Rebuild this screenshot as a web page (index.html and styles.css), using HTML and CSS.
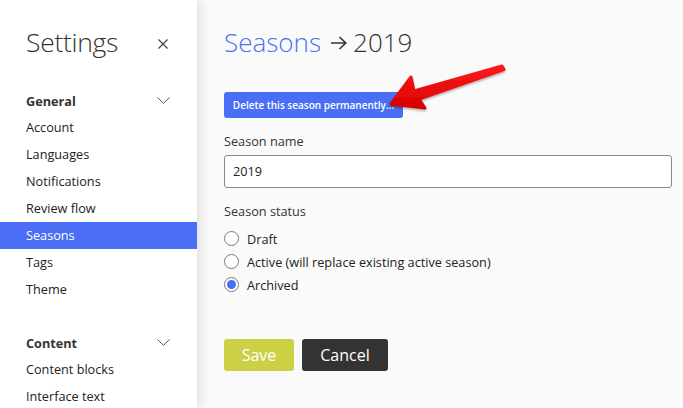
FILE: index.html
```html
<!DOCTYPE html>
<html>
<head>
<meta charset="utf-8">
<link rel="stylesheet" href="styles.css">
</head>
<body>
<div class="app">
  <aside class="sidebar">
    <div class="side-head">
      <h1 class="side-title">Settings</h1>
      <svg class="close" width="10" height="10" viewBox="0 0 10 10"><path d="M0.5 0.5L9.5 9.5M9.5 0.5L0.5 9.5" stroke="#444" stroke-width="1.2" fill="none"/></svg>
    </div>
    <div class="group">
      <div class="group-head"><span>General</span><svg class="chev" width="13" height="7" viewBox="0 0 13 7"><path d="M0.5 0.5L6.5 6.3L12.5 0.5" stroke="#555" stroke-width="1" fill="none"/></svg></div>
      <div class="item">Account</div>
      <div class="item">Languages</div>
      <div class="item">Notifications</div>
      <div class="item">Review flow</div>
      <div class="item active">Seasons</div>
      <div class="item">Tags</div>
      <div class="item">Theme</div>
    </div>
    <div class="group group2">
      <div class="group-head"><span>Content</span><svg class="chev" width="13" height="7" viewBox="0 0 13 7"><path d="M0.5 0.5L6.5 6.3L12.5 0.5" stroke="#555" stroke-width="1" fill="none"/></svg></div>
      <div class="item">Content blocks</div>
      <div class="item">Interface text</div>
    </div>
  </aside>
  <main class="main">
    <h2 class="page-title"><span class="crumb">Seasons</span><svg class="title-arrow" width="17" height="14" viewBox="0 0 17 14"><path d="M1 7H15.5M9.5 1L15.8 7L9.5 13" stroke="#333" stroke-width="1.6" fill="none"/></svg>2019</h2>
    <button class="btn-delete">Delete this season permanently...</button>
    <label class="field-label">Season name</label>
    <div class="input">2019</div>
    <div class="field-label status-label">Season status</div>
    <div class="radios">
      <div class="radio-row"><span class="radio"></span><span>Draft</span></div>
      <div class="radio-row"><span class="radio"></span><span>Active (will replace existing active season)</span></div>
      <div class="radio-row"><span class="radio checked"></span><span>Archived</span></div>
    </div>
    <div class="actions">
      <button class="btn btn-save">Save</button>
      <button class="btn btn-cancel">Cancel</button>
    </div>
  </main>
  <svg class="annot" width="683" height="408" viewBox="0 0 683 408">
    <defs>
      <filter id="sh" x="-10%" y="-30%" width="130%" height="180%">
        <feDropShadow dx="0" dy="1.5" stdDeviation="1.2" flood-color="#000" flood-opacity="0.35"/>
      </filter>
      <linearGradient id="rg" x1="0" y1="0" x2="0" y2="1">
        <stop offset="0" stop-color="#ff1a1a"/>
        <stop offset="1" stop-color="#d60000"/>
      </linearGradient>
    </defs>
    <path filter="url(#sh)" d="M391 104 L411 77 L414 91 L502 66 L504 69.5 L419 99 L425 108 Z" fill="url(#rg)" stroke="url(#rg)" stroke-width="3" stroke-linejoin="round"/>
  </svg>
</div>
</body>
</html>
```
FILE: styles.css
```css
* { box-sizing: border-box; }
html, body { margin: 0; padding: 0; }
body {
  font-family: "Open Sans", "Liberation Sans", sans-serif;
  background: #fafafa;
  color: #222;
  width: 683px;
  height: 408px;
  overflow: hidden;
}
.app {
  position: relative;
  display: flex;
  height: 408px;
}
.sidebar {
  width: 197px;
  flex: none;
  background: #fff;
  box-shadow: 2px 0 12px rgba(0,0,0,0.13);
  padding-top: 24px;
  position: relative;
  z-index: 1;
}
.side-head {
  display: flex;
  align-items: center;
  justify-content: space-between;
  padding: 0 29px 0 26px;
  height: 36px;
}
.side-title {
  margin: 0;
  font-size: 26.5px;
  font-weight: 300;
  line-height: 36px;
  color: #333;
  letter-spacing: -0.3px;
}
.close { margin-top: 4px; }
.group { margin-top: 27px; }
.group2 { margin-top: 26px; }
.group-head {
  display: flex;
  align-items: center;
  justify-content: space-between;
  height: 27px;
  padding: 0 27px 0 26px;
  font-size: 12.7px;
  font-weight: 700;
  color: #333;
}
.chev { margin-top: -1px; }
.item {
  height: 27px;
  line-height: 27px;
  padding: 0 27px 0 26px;
  font-size: 12.7px;
  color: #222;
}
.item.active {
  background: #4a6ff5;
  color: #fff;
}
.main {
  flex: 1;
  padding: 24px 11px 0 27px;
  display: flex;
  flex-direction: column;
  align-items: flex-start;
}
.page-title {
  margin: 0;
  font-size: 26px;
  font-weight: 300;
  line-height: 36px;
  color: #333;
  display: flex;
  align-items: center;
}
.crumb { color: #4a6ff5; }
.title-arrow { margin: 2px 6px 0 9px; }
.btn-delete {
  margin-top: 32px;
  height: 26px;
  width: 179px;
  padding: 0;
  border: none;
  border-radius: 3px;
  background: #4a6ff5;
  color: #fff;
  font-family: inherit;
  font-size: 10px;
  font-weight: 600;
}
.field-label {
  margin-top: 13px;
  font-size: 12.7px;
  line-height: 20px;
  color: #333;
}
.input {
  margin-top: 4px;
  align-self: stretch;
  height: 33px;
  border: 1px solid #8a8a8a;
  border-radius: 3px;
  background: #fff;
  padding: 0 8px;
  font-size: 12.7px;
  line-height: 31px;
  color: #222;
}
.status-label { margin-top: 13px; }
.radios { margin-top: 6px; }
.radio-row {
  display: flex;
  align-items: center;
  height: 23px;
  font-size: 12.7px;
  color: #222;
}
.radio {
  width: 15px;
  height: 15px;
  border: 1px solid #7a7a7a;
  border-radius: 50%;
  background: #fff;
  margin-right: 8px;
  display: flex;
  align-items: center;
  justify-content: center;
}
.radio.checked::after {
  content: "";
  width: 9px;
  height: 9px;
  border-radius: 50%;
  background: #4a6ff5;
}
.actions {
  margin-top: 43px;
  display: flex;
  gap: 8px;
}
.btn {
  height: 32px;
  border: none;
  border-radius: 3px;
  color: #fff;
  font-family: inherit;
  font-size: 16px;
  padding: 0;
}
.btn-save { width: 70px; background: #cbd044; }
.btn-cancel { width: 86px; background: #333; }
.annot {
  position: absolute;
  left: 0;
  top: 0;
  pointer-events: none;
  z-index: 2;
}
```
